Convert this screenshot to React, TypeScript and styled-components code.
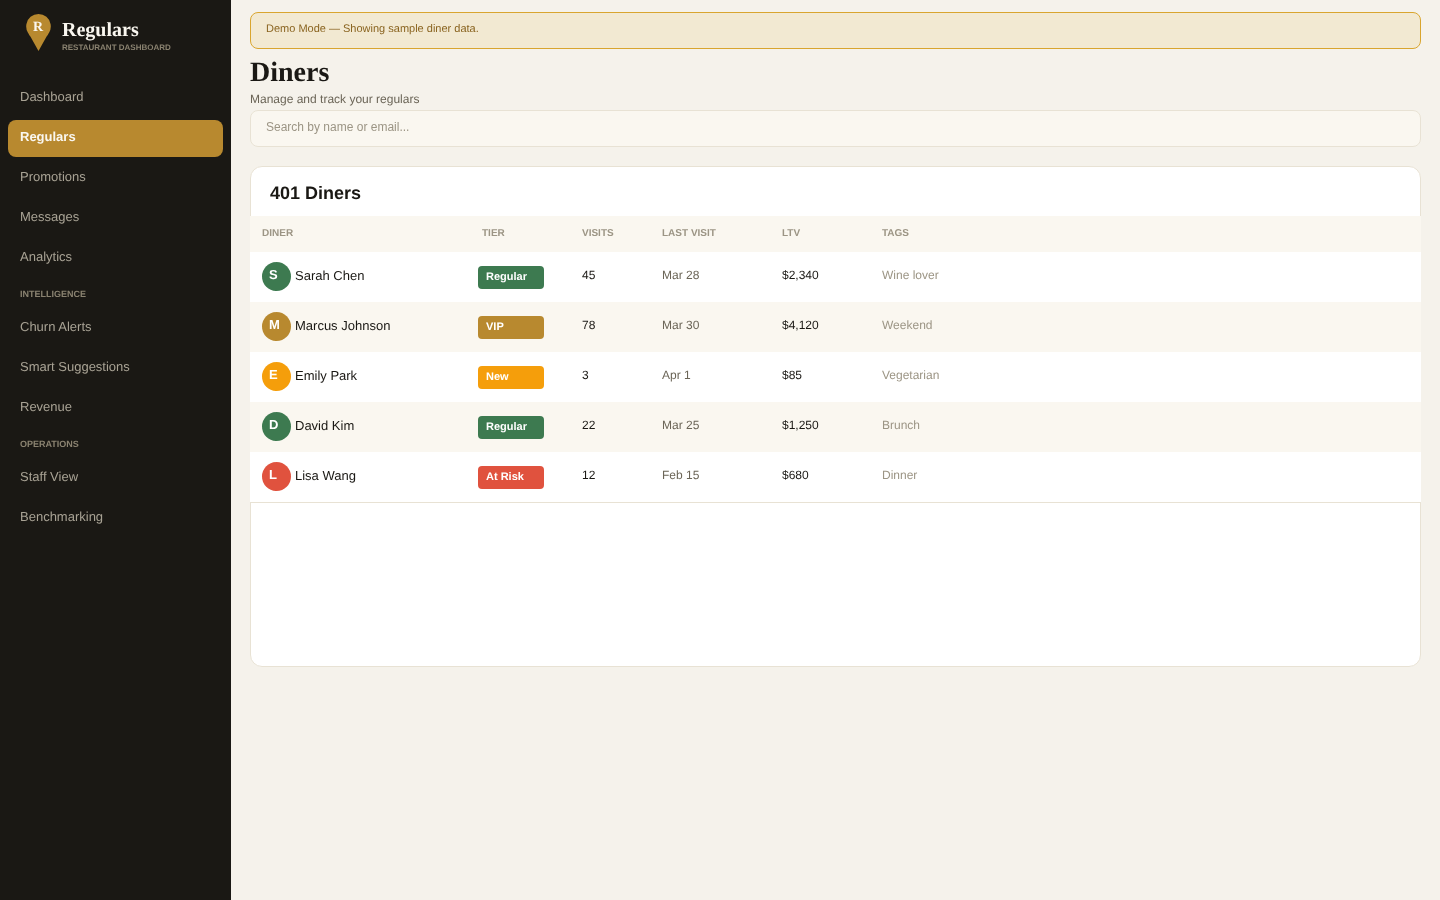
import React from "react";
import styled, { createGlobalStyle } from "styled-components";

const GlobalStyle = createGlobalStyle`
  html, body { margin: 0; padding: 0; height: 100%; }
  body {
    background: #f5f2eb;
    font-family: "Liberation Sans", Arial, sans-serif;
    color: #1a1814;
    text-rendering: geometricPrecision;
  }
  * { box-sizing: border-box; }
`;

const Layout = styled.div`
  display: flex;
  min-height: 900px;
  will-change: transform;
`;

const Sidebar = styled.aside`
  width: 231px;
  flex: none;
  background: #1a1814;
  padding: 13px 8px 0;
`;

const Brand = styled.div`
  display: flex;
  align-items: flex-start;
  gap: 11px;
  padding-left: 18px;
  height: 67px;
`;

const BrandText = styled.div`
  padding-top: 6px;
`;

const BrandName = styled.div`
  font-family: "Liberation Serif", "Times New Roman", serif;
  font-weight: 700;
  font-size: 20px;
  line-height: 23px;
  color: #faf7f0;
`;

const BrandSub = styled.div`
  margin-top: 1px;
  font-size: 8px;
  font-weight: 700;
  line-height: 10px;
  color: #8a8270;
`;

const NavItem = styled.div<{ $active?: boolean }>`
  height: 37px;
  margin-bottom: 3px;
  padding: 9px 12px 0;
  border-radius: 8px;
  font-size: 13px;
  line-height: 15px;
  color: ${(p) => (p.$active ? "#faf7f0" : "#a8a294")};
  font-weight: ${(p) => (p.$active ? 700 : 400)};
  background: ${(p) => (p.$active ? "#b8892f" : "transparent")};
`;

const NavSection = styled.div`
  height: 10px;
  margin: 12px 0 11px;
  padding: 0 12px;
  font-size: 9px;
  font-weight: 700;
  line-height: 10px;
  color: #8a8270;
`;

const Main = styled.main`
  flex: 1;
  min-width: 0;
  padding: 12px 19px 0;
`;

const Banner = styled.div`
  height: 37px;
  padding: 10px 15px 0;
  background: #f2e9d2;
  border: 1px solid #d9a52f;
  border-radius: 8px;
  font-size: 11px;
  line-height: 13px;
  color: #8a6420;
`;

const Title = styled.h1`
  margin: 8px 0 0;
  font-family: "Liberation Serif", "Times New Roman", serif;
  font-size: 28px;
  line-height: 32px;
  font-weight: 700;
  color: #1a1814;
`;

const Subtitle = styled.p`
  margin: 3px 0 0;
  font-size: 12px;
  line-height: 14px;
  color: #6b6557;
`;

const Search = styled.input`
  display: block;
  width: 100%;
  height: 37px;
  margin-top: 4px;
  padding: 0 15px 3px;
  background: #faf7f0;
  border: 1px solid #e8e2d4;
  border-radius: 8px;
  outline: none;
  font-family: inherit;
  font-size: 12px;
  color: #1a1814;
  &::placeholder { color: #9c9585; opacity: 1; }
`;

const Card = styled.section`
  height: 501px;
  margin-top: 19px;
  background: #fff;
  border: 1px solid #e8e2d4;
  border-radius: 12px;
`;

const CardTitle = styled.h2`
  height: 49px;
  margin: 0;
  padding: 16px 19px 0;
  font-size: 18px;
  line-height: 21px;
  font-weight: 700;
  color: #1a1814;
`;

const Table = styled.div`
  margin: 0 -1px;
  border-bottom: 1px solid #e8e2d4;
`;

const columns = "220px 100px 80px 120px 100px 1fr";

const HeadRow = styled.div`
  display: grid;
  grid-template-columns: ${columns};
  height: 36px;
  background: #faf7f0;
`;

const HeadCell = styled.div`
  padding: 12px 12px 0;
  font-size: 10px;
  line-height: 11px;
  font-weight: 700;
  color: #9c9585;
`;

const Row = styled.div`
  display: grid;
  grid-template-columns: ${columns};
  height: 50px;
  background: #fff;
  &:nth-child(even) { background: #faf7f0; }
`;

const Cell = styled.div<{ $tone?: "strong" | "muted" | "faint" }>`
  padding: 16px 12px 0;
  font-size: 12px;
  line-height: 14px;
  color: ${(p) => (p.$tone === "muted" ? "#6b6557" : p.$tone === "faint" ? "#9c9585" : "#1a1814")};
`;

const DinerCell = styled.div`
  display: flex;
  align-items: flex-start;
  gap: 4px;
  padding: 10px 12px 0;
`;

const Avatar = styled.div<{ $color: string }>`
  width: 29px;
  height: 29px;
  flex: none;
  padding: 5px 0 0 7px;
  border-radius: 50%;
  background: ${(p) => p.$color};
  color: #fff;
  font-size: 13px;
  line-height: 15px;
  font-weight: 700;
`;

const DinerName = styled.div`
  padding-top: 6px;
  font-size: 13px;
  line-height: 15px;
  color: #1a1814;
`;

const TierCell = styled.div`
  padding: 14px 0 0 8px;
`;

const Badge = styled.div<{ $color: string }>`
  width: 66px;
  height: 23px;
  padding: 5px 8px 0;
  border-radius: 4px;
  background: ${(p) => p.$color};
  color: #fff;
  font-size: 11px;
  line-height: 13px;
  font-weight: 700;
`;

const GREEN = "#3d7a50";
const GOLD = "#b8892f";
const AMBER = "#f59e0b";
const RED = "#e0523e";

const diners = [
  { name: "Sarah Chen", color: GREEN, tier: "Regular", visits: 45, last: "Mar 28", ltv: "$2,340", tag: "Wine lover" },
  { name: "Marcus Johnson", color: GOLD, tier: "VIP", visits: 78, last: "Mar 30", ltv: "$4,120", tag: "Weekend" },
  { name: "Emily Park", color: AMBER, tier: "New", visits: 3, last: "Apr 1", ltv: "$85", tag: "Vegetarian" },
  { name: "David Kim", color: GREEN, tier: "Regular", visits: 22, last: "Mar 25", ltv: "$1,250", tag: "Brunch" },
  { name: "Lisa Wang", color: RED, tier: "At Risk", visits: 12, last: "Feb 15", ltv: "$680", tag: "Dinner" },
];

function Logo() {
  return (
    <svg width="25" height="38" viewBox="0 0 25 38" style={{ flex: "none" }}>
      <path
        d="M1.85 19.45A12.3 12.3 0 1 1 23.15 19.45C22 21.5 21.5 22.5 20.6 23.6L12.5 38L4.4 23.6C3.5 22.5 3 21.5 1.85 19.45Z"
        fill="#b8892f"
      />
      <text
        x="12"
        y="18"
        textAnchor="middle"
        fontFamily="'Liberation Serif', serif"
        fontSize="14"
        fontWeight="700"
        fill="#faf7f0"
      >
        R
      </text>
    </svg>
  );
}

export default function App() {
  return (
    <>
      <GlobalStyle />
      <Layout>
        <Sidebar>
          <Brand>
            <Logo />
            <BrandText>
              <BrandName>Regulars</BrandName>
              <BrandSub>RESTAURANT DASHBOARD</BrandSub>
            </BrandText>
          </Brand>
          <NavItem>Dashboard</NavItem>
          <NavItem $active>Regulars</NavItem>
          <NavItem>Promotions</NavItem>
          <NavItem>Messages</NavItem>
          <NavItem>Analytics</NavItem>
          <NavSection>INTELLIGENCE</NavSection>
          <NavItem>Churn Alerts</NavItem>
          <NavItem>Smart Suggestions</NavItem>
          <NavItem>Revenue</NavItem>
          <NavSection>OPERATIONS</NavSection>
          <NavItem>Staff View</NavItem>
          <NavItem>Benchmarking</NavItem>
        </Sidebar>
        <Main>
          <Banner>Demo Mode — Showing sample diner data.</Banner>
          <Title>Diners</Title>
          <Subtitle>Manage and track your regulars</Subtitle>
          <Search placeholder="Search by name or email..." />
          <Card>
            <CardTitle>401 Diners</CardTitle>
            <Table>
              <HeadRow>
                <HeadCell>DINER</HeadCell>
                <HeadCell>TIER</HeadCell>
                <HeadCell>VISITS</HeadCell>
                <HeadCell>LAST VISIT</HeadCell>
                <HeadCell>LTV</HeadCell>
                <HeadCell>TAGS</HeadCell>
              </HeadRow>
              <div>
                {diners.map((d) => (
                  <Row key={d.name}>
                    <DinerCell>
                      <Avatar $color={d.color}>{d.name[0]}</Avatar>
                      <DinerName>{d.name}</DinerName>
                    </DinerCell>
                    <TierCell>
                      <Badge $color={d.color}>{d.tier}</Badge>
                    </TierCell>
                    <Cell>{d.visits}</Cell>
                    <Cell $tone="muted">{d.last}</Cell>
                    <Cell>{d.ltv}</Cell>
                    <Cell $tone="faint">{d.tag}</Cell>
                  </Row>
                ))}
              </div>
            </Table>
          </Card>
        </Main>
      </Layout>
    </>
  );
}
